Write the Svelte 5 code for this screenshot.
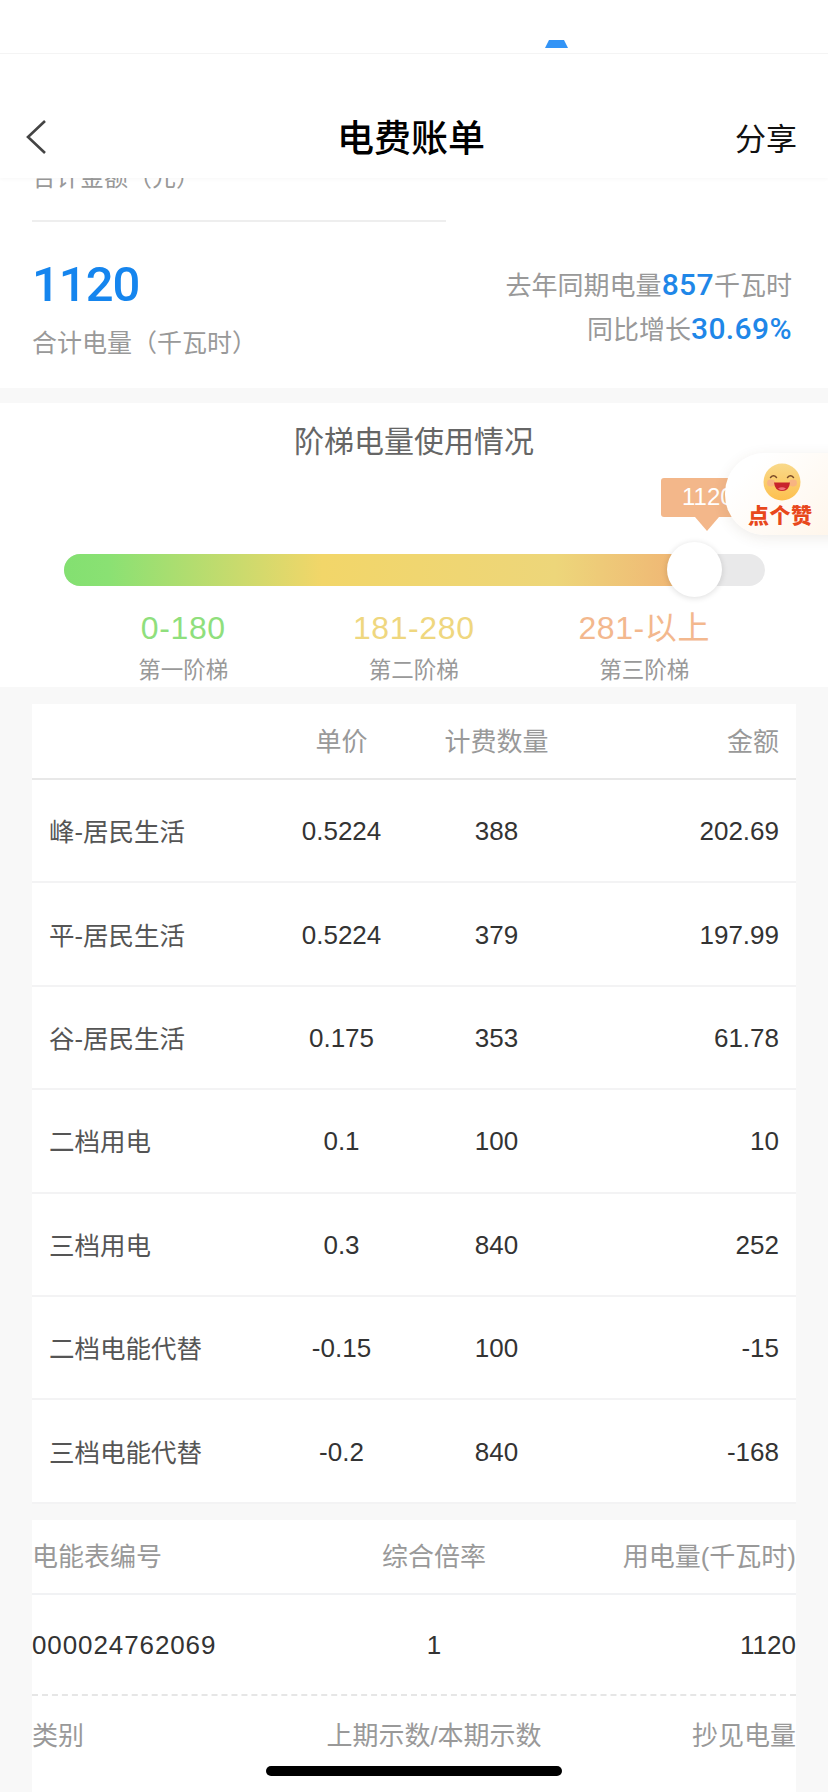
<script>
  const tiers = [
    { range: '0-180', name: '第一阶梯', cls: 'green' },
    { range: '181-280', name: '第二阶梯', cls: 'yellow' },
    { range: '281-以上', name: '第三阶梯', cls: 'orange' }
  ];
  const rows = [
    ['峰-居民生活', '0.5224', '388', '202.69'],
    ['平-居民生活', '0.5224', '379', '197.99'],
    ['谷-居民生活', '0.175', '353', '61.78'],
    ['二档用电', '0.1', '100', '10'],
    ['三档用电', '0.3', '840', '252'],
    ['二档电能代替', '-0.15', '100', '-15'],
    ['三档电能代替', '-0.2', '840', '-168']
  ];
</script>

<div class="page">
  <header class="top">
    <div class="status">
      <svg class="tab-mark" width="24" height="8" viewBox="0 0 24 8"><path d="M4 0H19L23 8H0Z" fill="#3394f6" /></svg>
    </div>
    <nav class="nav">
      <svg class="back" width="22" height="36" viewBox="0 0 22 36"><path d="M20 2 3 18l17 16" fill="none" stroke="#444" stroke-width="2.6" /></svg>
      <h1>电费账单</h1>
      <span class="share">分享</span>
    </nav>
  </header>

  <section class="summary">
    <div class="amount-label">合计金额（元）</div>
    <div class="rule"></div>
    <div class="totals">
      <div>
        <div class="big">1120</div>
        <div class="big-label">合计电量（千瓦时）</div>
      </div>
      <div class="compare">
        <div>去年同期电量<b>857</b>千瓦时</div>
        <div>同比增长<b>30.69%</b></div>
      </div>
    </div>
  </section>

  <section class="ladder">
    <h2>阶梯电量使用情况</h2>
    <div class="meter">
      <div class="tip">1120</div>
      <div class="track"><div class="fill"></div></div>
      <div class="thumb"></div>
    </div>
    <div class="tiers">
      {#each tiers as t}
        <div class="tier">
          <div class="range {t.cls}">{t.range}</div>
          <div class="tier-name">{t.name}</div>
        </div>
      {/each}
    </div>
    <div class="like">
      <svg width="40" height="40" viewBox="0 0 40 40">
        <defs>
          <linearGradient id="face" x1="0" y1="0" x2="0" y2="1">
            <stop offset="0" stop-color="#f9d98a" />
            <stop offset="1" stop-color="#fdc04e" />
          </linearGradient>
        </defs>
        <circle cx="20" cy="20" r="18.5" fill="url(#face)" />
        <ellipse cx="9" cy="21" rx="4" ry="3.4" fill="#f6a98c" opacity=".7" />
        <ellipse cx="31" cy="21" rx="4" ry="3.4" fill="#f6a98c" opacity=".7" />
        <path d="M8.500 15.500q3-3.500 6 0M25.500 15.500q3-3.500 6 0" fill="none" stroke="#7a4a28" stroke-width="1.500" stroke-linecap="round" />
        <path d="M12 20.500h16q-.8 8.500-8 8.500t-8-8.500Z" fill="#c8232c" />
        <path d="M16 26.500q4-2.500 8 0q-4 3.500-8 0Z" fill="#f2707a" />
      </svg>
      <span>点个赞</span>
    </div>
  </section>

  <main class="tables">
    <div class="bill">
      <div class="bill-row head">
        <span></span><span class="mid">单价</span><span class="mid">计费数量</span><span class="end">金额</span>
      </div>
      {#each rows as r}
        <div class="bill-row">
          <span class="name">{r[0]}</span>
          <span class="mid num">{r[1]}</span>
          <span class="mid num">{r[2]}</span>
          <span class="end num">{r[3]}</span>
        </div>
      {/each}
    </div>

    <div class="reading">
      <div class="read-row read-head">
        <span>电能表编号</span><span class="mid">综合倍率</span><span class="end">用电量(千瓦时)</span>
      </div>
      <div class="read-row read-value">
        <span class="serial">000024762069</span><span class="mid">1</span><span class="end">1120</span>
      </div>
      <div class="read-row read-sub">
        <span>类别</span><span class="mid">上期示数/本期示数</span><span class="end">抄见电量</span>
      </div>
    </div>
  </main>

  <div class="home"></div>
</div>

<style>
  :global(body) {
    margin: 0;
    background: #f8f8f8;
  }
  .page {
    position: relative;
    width: 828px;
    height: 1792px;
    overflow: hidden;
    background: #f8f8f8;
    font-family: "Liberation Sans", "Noto Sans CJK SC", sans-serif;
    color: #333;
  }
  .top {
    position: absolute;
    inset: 0 0 auto 0;
    z-index: 2;
    height: 178px;
    background: #fff;
    box-shadow: 0 2px 3px rgba(0, 0, 0, 0.025);
  }
  .status {
    position: relative;
    height: 54px;
    box-sizing: border-box;
    border-bottom: 1px solid #f4f4f4;
  }
  .tab-mark {
    position: absolute;
    left: 545px;
    top: 40px;
  }
  .nav {
    height: 124px;
    display: grid;
    grid-template-columns: 1fr auto 1fr;
    align-items: center;
    padding: 40px 31px 0 25px;
    box-sizing: border-box;
  }
  .back { display: block; margin-top: 2px; }
  h1 {
    margin: 0;
    font-size: 37px;
    font-weight: 500;
    color: #000;
  }
  .share {
    justify-self: end;
    font-size: 31px;
    color: #111;
  }
  .summary {
    height: 388px;
    box-sizing: border-box;
    padding: 160px 36px 0 32px;
    background: #fff;
  }
  .amount-label {
    font-size: 24px;
    line-height: 36px;
    color: #999;
  }
  .rule {
    width: 414px;
    height: 2px;
    margin-top: 24px;
    background: #eee;
  }
  .totals {
    display: flex;
    justify-content: space-between;
    margin-top: 35px;
  }
  .big {
    font-family: Roboto, "Liberation Sans", sans-serif;
    font-size: 49px;
    line-height: 56px;
    font-weight: 500;
    letter-spacing: -1px;
    color: #1585ee;
  }
  .big-label {
    margin-top: 12px;
    font-size: 25px;
    line-height: 36px;
    color: #999;
  }
  .compare {
    margin-top: 7px;
    text-align: right;
    font-size: 26px;
    line-height: 44px;
    color: #999;
  }
  .compare b {
    font-family: Roboto, "Liberation Sans", sans-serif;
    font-size: 30px;
    line-height: 1;
    color: #1f87e8;
    font-weight: 500;
    letter-spacing: 0.400px;
  }
  .ladder {
    position: relative;
    margin-top: 15px;
    height: 284px;
    background: #fff;
  }
  h2 {
    margin: 0;
    padding-top: 17px;
    text-align: center;
    font-size: 30px;
    line-height: 44px;
    font-weight: 400;
    color: #666;
  }
  .meter {
    position: absolute;
    left: 64px;
    top: 75px;
    width: 701px;
    height: 125px;
  }
  .tip {
    position: absolute;
    left: 597px;
    top: 0;
    width: 90px;
    height: 39px;
    padding-left: 21px;
    box-sizing: border-box;
    border-radius: 3px;
    background: #f3b78a;
    color: #fff;
    font-size: 24px;
    line-height: 38px;
  }
  .tip::after {
    content: "";
    position: absolute;
    left: 34px;
    top: 39px;
    border: 12px solid transparent;
    border-top: 14px solid #f3b78a;
    border-bottom: 0;
  }
  .track {
    position: absolute;
    left: 0;
    right: 0;
    top: 76px;
    height: 32px;
    border-radius: 16px;
    background: #e9e9ea;
    overflow: hidden;
  }
  .fill {
    width: 630px;
    height: 100%;
    background: linear-gradient(90deg, #83e071 0%, #8ae173 7%, #f2d669 41%, #edd67a 78%, #f0b274 100%);
  }
  .thumb {
    position: absolute;
    left: 603px;
    top: 64px;
    width: 55px;
    height: 55px;
    border-radius: 50%;
    background: #fff;
    box-shadow: 0 1px 6px rgba(0, 0, 0, 0.14);
  }
  .tiers {
    position: absolute;
    left: 68px;
    top: 204px;
    display: grid;
    grid-template-columns: repeat(3, 230.500px);
    text-align: center;
  }
  .range {
    font-size: 32px;
    line-height: 42px;
    letter-spacing: 0.600px;
  }
  .green { color: #8fdf7d; }
  .yellow { color: #efd77f; }
  .orange { color: #f3b88e; }
  .tier-name {
    font-size: 22.500px;
    line-height: 32px;
    margin-top: 6px;
    color: #999;
  }
  .like {
    position: absolute;
    left: 725px;
    top: 50px;
    width: 120px;
    height: 82px;
    border-radius: 40px 0 0 40px;
    background: linear-gradient(135deg, #fff 20%, #fff5e9 100%);
    box-shadow: 0 3px 14px rgba(90, 70, 40, 0.1);
    display: flex;
    flex-direction: column;
    padding-left: 23px;
    box-sizing: border-box;
  }
  .like svg {
    display: block;
    margin: 9px 0 0 14px;
  }
  .like span {
    margin-top: 2px;
    width: 66px;
    font-size: 21px;
    line-height: 24px;
    font-weight: 900;
    letter-spacing: 0.500px;
    color: #e8481c;
    white-space: nowrap;
  }
  .tables {
    margin: 17px 32px 0;
  }
  .bill {
    background: #fff;
  }
  .bill-row {
    display: grid;
    grid-template-columns: 212px 161px 149px 1fr;
    align-items: center;
    height: 103.400px;
    padding: 0 17px 0 17px;
    box-sizing: border-box;
    border-bottom: 2px solid #f3f3f4;
    font-size: 26px;
    color: #333;
  }
  .bill-row.head {
    height: 76px;
    color: #999;
    border-bottom-color: #e8e8e8;
    padding-bottom: 3px;
  }
  .name { color: #555; font-size: 25.500px; padding-bottom: 2px; }
  .mid { text-align: center; }
  .end { text-align: right; }
  .num { padding-top: 2px; }
  .reading {
    margin-top: 16px;
    background: #fff;
    height: 290px;
  }
  .read-row {
    display: grid;
    grid-template-columns: 280px 244px 1fr;
    align-items: center;
    font-size: 26px;
    color: #999;
  }
  .read-head {
    height: 75px;
    box-sizing: border-box;
    border-bottom: 2px solid #f1f2f4;
    padding: 0 0 4px 0;
  }
  .read-value {
    height: 101px;
    box-sizing: border-box;
    border-bottom: 2px dashed #e6e6e6;
    color: #333;
    font-size: 26px;
    padding-top: 2px;
  }
  .serial { letter-spacing: 0.900px; }
  .read-sub {
    height: 76px;
  }
  .home {
    position: absolute;
    left: 266px;
    top: 1766px;
    width: 296px;
    height: 10px;
    border-radius: 5px;
    background: #000;
  }
</style>
